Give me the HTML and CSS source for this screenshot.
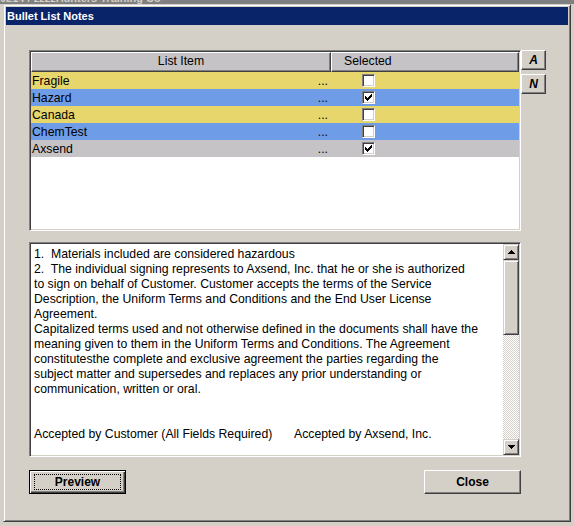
FILE: index.html
```html
<!DOCTYPE html>
<html>
<head>
<meta charset="utf-8">
<title>Bullet List Notes</title>
<link rel="stylesheet" href="styles.css">
</head>
<body>
<div class="backdrop"><span>0214 / zzzzHunters Training Co</span></div>
<div class="dialog">
  <div class="titlebar">Bullet List Notes</div>
  <div class="content">
    <div class="top-row">
      <div class="grid">
        <div class="grid-head">
          <div class="hcell c1 center">List Item</div>
          <div class="hcell c2 sel">Selected</div>
        </div>
        <div class="grid-row yellow">
          <div class="cell c1"><span>Fragile</span><span class="dots">...</span></div>
          <div class="cell c2"><span class="check"></span></div>
        </div>
        <div class="grid-row blue">
          <div class="cell c1"><span>Hazard</span><span class="dots">...</span></div>
          <div class="cell c2"><span class="check"><svg viewBox="0 0 11 11" width="11" height="11"><path d="M2 4h1v3h-1zM3 5h1v3h-1zM4 6h1v3h-1zM5 5h1v3h-1zM6 4h1v3h-1zM7 3h1v3h-1zM8 2h1v3h-1z" fill="#000" shape-rendering="crispEdges"/></svg></span></div>
        </div>
        <div class="grid-row yellow">
          <div class="cell c1"><span>Canada</span><span class="dots">...</span></div>
          <div class="cell c2"><span class="check"></span></div>
        </div>
        <div class="grid-row blue">
          <div class="cell c1"><span>ChemTest</span><span class="dots">...</span></div>
          <div class="cell c2"><span class="check"></span></div>
        </div>
        <div class="grid-row gray">
          <div class="cell c1"><span>Axsend</span><span class="dots">...</span></div>
          <div class="cell c2"><span class="check"><svg viewBox="0 0 11 11" width="11" height="11"><path d="M2 4h1v3h-1zM3 5h1v3h-1zM4 6h1v3h-1zM5 5h1v3h-1zM6 4h1v3h-1zM7 3h1v3h-1zM8 2h1v3h-1z" fill="#000" shape-rendering="crispEdges"/></svg></span></div>
        </div>
      </div>
      <div class="side">
        <button class="btn small">A</button>
        <button class="btn small">N</button>
      </div>
    </div>
    <div class="memo">
      <div class="memo-text">
        <div class="line">1.&nbsp; Materials included are considered hazardous</div>
        <div class="line">2.&nbsp; The individual signing represents to Axsend, Inc. that he or she is authorized</div>
        <div class="line">to sign on behalf of Customer. Customer accepts the terms of the Service</div>
        <div class="line">Description, the Uniform Terms and Conditions and the End User License</div>
        <div class="line">Agreement.</div>
        <div class="line">Capitalized terms used and not otherwise defined in the documents shall have the</div>
        <div class="line">meaning given to them in the Uniform Terms and Conditions. The Agreement</div>
        <div class="line">constitutesthe complete and exclusive agreement the parties regarding the</div>
        <div class="line">subject matter and supersedes and replaces any prior understanding or</div>
        <div class="line">communication, written or oral.</div>
        <div class="line blank"></div>
        <div class="line blank"></div>
        <div class="line"><span class="accept-left">Accepted by Customer (All Fields Required)</span><span>Accepted by Axsend, Inc.</span></div>
      </div>
      <div class="scrollbar">
        <div class="sbtn"><svg width="7" height="4" viewBox="0 0 7 4"><path d="M3 0h1v1h1v1h1v1h1v1h-7v-1h1v-1h1v-1h1z" fill="#000" shape-rendering="crispEdges"/></svg></div>
        <div class="thumb"></div>
        <div class="track"></div>
        <div class="sbtn"><svg width="7" height="4" viewBox="0 0 7 4"><path d="M0 0h7v1h-1v1h-1v1h-1v1h-1v-1h-1v-1h-1v-1h-1z" fill="#000" shape-rendering="crispEdges"/></svg></div>
      </div>
    </div>
    <div class="bottom-row">
      <button class="btn default"><span class="focus">Preview</span></button>
      <button class="btn plain">Close</button>
    </div>
  </div>
</div>
</body>
</html>
```

FILE: styles.css
```css
* { box-sizing: border-box; }
html, body { margin: 0; padding: 0; }
body {
  width: 574px;
  height: 526px;
  overflow: hidden;
  background: #d4d0c8;
  font-family: "Liberation Sans", Arial, sans-serif;
  font-size: 12px;
  color: #000;
}
.backdrop {
  height: 4px;
  background: #808080;
  overflow: hidden;
}
.backdrop span {
  display: block;
  margin-top: -8px;
  font-weight: bold;
  font-size: 11px;
  line-height: 12px;
  color: #d4d0c8;
  white-space: nowrap;
}
.dialog {
  margin-left: 3px;
  width: 568px;
  height: 518px;
  border: 1px solid;
  border-color: #d4d0c8 #404040 #404040 #d4d0c8;
  box-shadow: inset 1px 1px #fff, inset -1px -1px #808080;
  padding: 2px;
  background: #d4d0c8;
}
.titlebar {
  height: 18px;
  background: #0a246a;
  color: #fff;
  font-weight: bold;
  font-size: 11px;
  line-height: 18px;
  padding-left: 1px;
  white-space: nowrap;
}
.content { padding: 25px 0 0 23px; }
.top-row { display: flex; align-items: flex-start; }

.grid, .memo {
  border: 1px solid;
  border-color: #808080 #fff #fff #808080;
  box-shadow: inset 1px 1px #404040, inset -1px -1px #d4d0c8;
  padding: 1px;
  background: #fff;
}
.grid { width: 492px; height: 181px; }
.grid-head { display: flex; height: 20px; }
.hcell {
  border: 1px solid;
  border-color: #fff #404040 #404040 #fff;
  box-shadow: inset -1px -1px #808080;
  background: #c6c3c6;
  line-height: 17px;
  font-size: 12.25px;
  white-space: nowrap;
}
.center { text-align: center; }
.sel { padding-left: 12px; }
.c1 { width: 300px; }
.c2 { width: 188px; }
.grid-row { display: flex; height: 17px; }
.yellow { background: #e6d66b; }
.blue { background: #6f9ce6; }
.gray { background: #c6c3c6; }
.cell { line-height: 16px; white-space: nowrap; font-size: 12.25px; }
.cell.c1 {
  display: flex;
  justify-content: space-between;
  padding: 1px 3px 0 1px;
}
.cell.c2 { padding: 2px 0 0 31px; }
.check {
  display: block;
  width: 13px;
  height: 13px;
  border: 1px solid;
  border-color: #808080 #fff #fff #808080;
  box-shadow: inset 1px 1px #404040, inset -1px -1px #d4d0c8;
  background: #fff;
}
.check svg { display: block; }

.side { display: flex; flex-direction: column; gap: 4px; }

button {
  font-family: "Liberation Sans", Arial, sans-serif;
  color: #000;
  margin: 0;
  padding: 0;
  background: #d4d0c8;
  cursor: default;
}
.btn {
  border: 1px solid;
  border-color: #fff #404040 #404040 #fff;
  box-shadow: inset -1px -1px #808080;
  font-weight: bold;
  font-size: 12px;
}
.btn.small {
  width: 25px;
  height: 20px;
  font-style: italic;
  line-height: 16px;
}

.memo {
  margin-top: 11px;
  width: 492px;
  height: 215px;
  display: flex;
}
.memo-text {
  flex: 1;
  padding: 3px 0 0 3px;
  line-height: 15px;
  font-size: 12.25px;
  overflow: hidden;
}
.line { white-space: nowrap; height: 15px; }
.accept-left { display: inline-block; width: 260px; }
.scrollbar {
  width: 16px;
  display: flex;
  flex-direction: column;
}
.sbtn, .thumb {
  border: 1px solid;
  border-color: #d4d0c8 #404040 #404040 #d4d0c8;
  box-shadow: inset 1px 1px #fff, inset -1px -1px #808080;
  background: #d4d0c8;
}
.sbtn {
  height: 16px;
  display: flex;
  align-items: center;
  justify-content: center;
}
.sbtn svg { display: block; }
.thumb { height: 75px; }
.track {
  flex: 1;
  background: conic-gradient(#fff 25%, #d4d0c8 0 50%, #fff 0 75%, #d4d0c8 0);
  background-size: 2px 2px;
}

.bottom-row {
  display: flex;
  justify-content: space-between;
  width: 492px;
  margin-top: 13px;
}
.bottom-row .btn { width: 97px; height: 24px; }
.btn.default {
  border: 1px solid #000;
  box-shadow: inset 1px 1px #fff, inset -1px -1px #404040, inset -2px -2px #808080;
  padding: 3px 4px;
}
.focus {
  display: flex;
  align-items: center;
  justify-content: center;
  width: 100%;
  height: 100%;
  border: 1px dotted #000;
}
```
